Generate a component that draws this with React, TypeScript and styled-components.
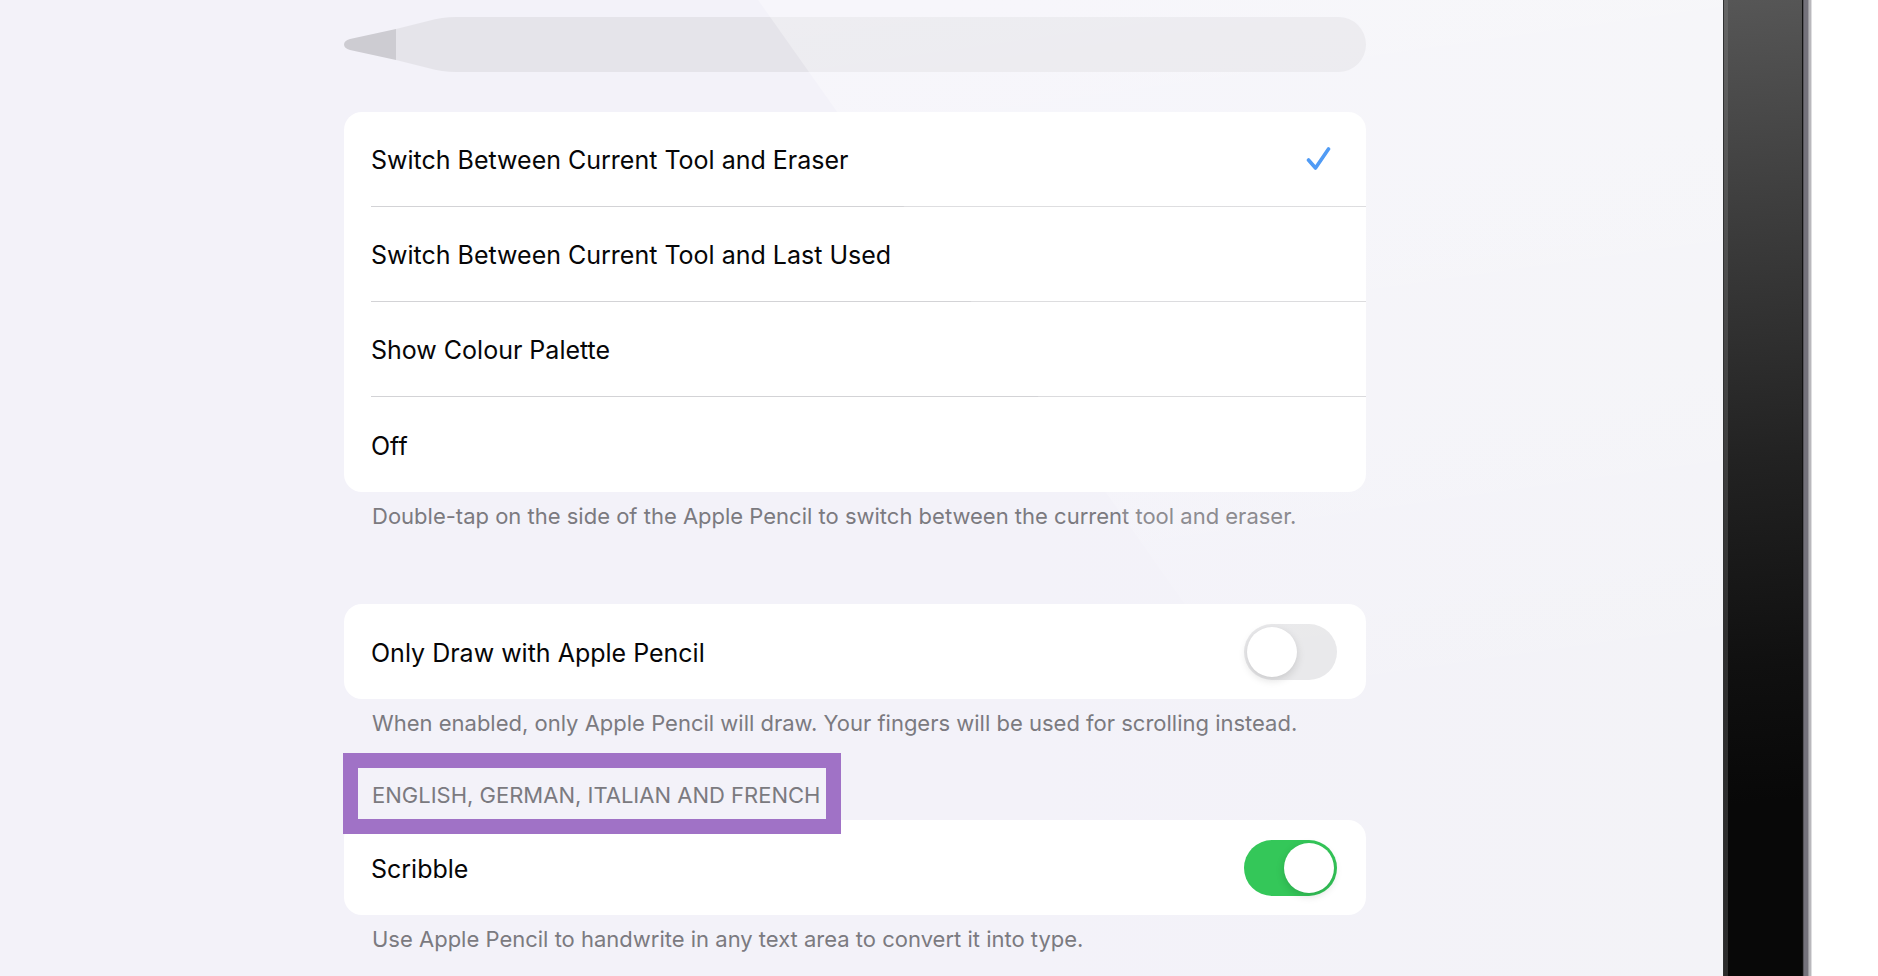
import React, { useState } from "react";
import styled, { createGlobalStyle } from "styled-components";

const GlobalStyle = createGlobalStyle`
  *, *::before, *::after { box-sizing: border-box; }
  body {
    margin: 0;
    background: #fff;
    color: #060607;
    font-family: Inter, "Liberation Sans", sans-serif;
    font-variant-ligatures: none;
  }
`;

const Device = styled.div`
  display: flex;
  min-height: 100vh;
  padding-right: 66px;
`;

const Screen = styled.main`
  position: relative;
  flex: 1;
  min-width: 0;
  display: grid;
  grid-template-columns: minmax(16px, 344fr) minmax(0, 1022fr) minmax(16px, 357fr);
  background: linear-gradient(90deg, #f3f2f9 60%, #f3f3f7);
`;

const Glare = styled.div`
  position: absolute;
  inset: 0;
  z-index: 2;
  pointer-events: none;
  clip-path: polygon(44% 0, 100% 0, 100% 100%, 84% 100%);
  background: linear-gradient(172deg, rgba(255, 255, 255, 0.38), rgba(255, 255, 255, 0.14) 55%, rgba(255, 255, 255, 0) 78%);
`;

const Content = styled.div`
  grid-column: 2;
  padding: 17px 0 20px;
`;

const Pencil = styled.div`
  display: flex;
  height: 55px;
  margin-bottom: 40px;
`;

const PencilTip = styled.svg`
  flex: none;
  width: 112px;
  height: 55px;
`;

const Barrel = styled.div`
  flex: 1;
  background: #e5e4ea;
  border-radius: 0 28px 28px 0;
`;

const Section = styled.section<{ $spaced?: boolean }>`
  margin-top: ${(p) => (p.$spaced ? 74 : 0)}px;
`;

const Card = styled.div`
  overflow: hidden;
  border-radius: 18px;
  background: #fff;
`;

const Row = styled.label`
  display: flex;
  align-items: center;
  justify-content: space-between;
  min-height: 95px;
  margin-left: 27px;
  padding-right: 29px;
  font-size: 25px;
  line-height: 32px;
  cursor: pointer;

  &:not(:last-child) {
    border-bottom: 1px solid #d3d3d6;
  }
`;

const RowText = styled.span`
  padding-top: 2px;
`;

const Radio = styled.input`
  position: absolute;
  appearance: none;
  margin: 0;
  opacity: 0;
`;

const CheckIcon = styled.svg`
  width: 26px;
  height: 26px;
  margin-right: 6px;
`;

const Switch = styled.input`
  appearance: none;
  flex: none;
  display: flex;
  width: 93px;
  height: 56px;
  margin: 0;
  padding: 3px;
  border-radius: 28px;
  background: #e8e8ea;
  cursor: pointer;

  &::before {
    content: "";
    width: 50px;
    height: 50px;
    border-radius: 50%;
    background: #fff;
    box-shadow: 0 3px 8px rgba(0, 0, 0, 0.15);
  }

  &:checked {
    justify-content: flex-end;
    background: #34c759;
  }
`;

const Note = styled.p`
  margin: 10px 0 0;
  padding-left: 28px;
  font-size: 22px;
  line-height: 28px;
  color: #7b7a80;
`;

const HighlightedHeading = styled.h2`
  position: relative;
  z-index: 1;
  width: fit-content;
  margin: 16px 0 -14px -1px;
  padding: 13px 6px 10px 14px;
  border: 15px solid #a072c6;
  font-size: 22px;
  font-weight: 400;
  line-height: 28px;
  color: #7b7a80;
  text-transform: uppercase;
`;

const Bezel = styled.div`
  display: flex;
  flex: none;
  width: 89px;
`;

const BezelRim = styled.div`
  width: 5px;
  border-left: 1px solid #303132;
  background: linear-gradient(#666, #4c4c4c 30%, #303030 65%, #2b2b2b);
`;

const BezelGlass = styled.div`
  flex: 1;
  border-right: 1px solid #111;
  background: linear-gradient(176deg, #565656, #3d3d3d 22%, #222 47%, #101010 68%, #080808 82%);
`;

const BezelFrame = styled.div`
  width: 9px;
  background: linear-gradient(90deg, #55545a 1px, #74727b 1px 5px, #9b9a9f 5px 6px, #b9b8bc 6px 8px, #dedee0 8px);
`;

const actions = [
  "Switch Between Current Tool and Eraser",
  "Switch Between Current Tool and Last Used",
  "Show Colour Palette",
  "Off",
];

export default function App() {
  const [action, setAction] = useState(actions[0]);
  const [onlyPencil, setOnlyPencil] = useState(false);
  const [scribble, setScribble] = useState(true);

  return (
    <>
      <GlobalStyle />
      <Device>
        <Screen>
          <Content>
            <Pencil aria-hidden="true">
              <PencilTip viewBox="0 0 112 55">
                <path d="M52 12 L84 4 Q98 0 112 0 V55 Q98 55 84 51 L52 43 Z" fill="#e5e4ea" />
                <path d="M52 12 L6 22 C-2 24 -2 31 6 33 L52 43 Z" fill="#cdccd2" />
              </PencilTip>
              <Barrel />
            </Pencil>

            <Section>
              <Card role="radiogroup" aria-label="Double-tap action">
                {actions.map((name) => (
                  <Row key={name}>
                    <Radio
                      type="radio"
                      name="action"
                      checked={action === name}
                      onChange={() => setAction(name)}
                    />
                    <RowText>{name}</RowText>
                    {action === name && (
                      <CheckIcon viewBox="0 0 26 26" aria-hidden="true">
                        <path
                          d="M3.5 14 L10.5 22 L23.5 3"
                          fill="none"
                          stroke="#1479f2"
                          strokeWidth="3.6"
                          strokeLinecap="round"
                          strokeLinejoin="round"
                        />
                      </CheckIcon>
                    )}
                  </Row>
                ))}
              </Card>
              <Note>Double-tap on the side of the Apple Pencil to switch between the current tool and eraser.</Note>
            </Section>

            <Section $spaced>
              <Card>
                <Row>
                  <RowText>Only Draw with Apple Pencil</RowText>
                  <Switch
                    type="checkbox"
                    role="switch"
                    checked={onlyPencil}
                    onChange={(e) => setOnlyPencil(e.target.checked)}
                  />
                </Row>
              </Card>
              <Note>When enabled, only Apple Pencil will draw. Your fingers will be used for scrolling instead.</Note>
            </Section>

            <Section>
              <HighlightedHeading>English, German, Italian and French</HighlightedHeading>
              <Card>
                <Row>
                  <RowText>Scribble</RowText>
                  <Switch
                    type="checkbox"
                    role="switch"
                    checked={scribble}
                    onChange={(e) => setScribble(e.target.checked)}
                  />
                </Row>
              </Card>
              <Note>Use Apple Pencil to handwrite in any text area to convert it into type.</Note>
            </Section>
          </Content>
          <Glare />
        </Screen>
        <Bezel aria-hidden="true">
          <BezelRim />
          <BezelGlass />
          <BezelFrame />
        </Bezel>
      </Device>
    </>
  );
}
